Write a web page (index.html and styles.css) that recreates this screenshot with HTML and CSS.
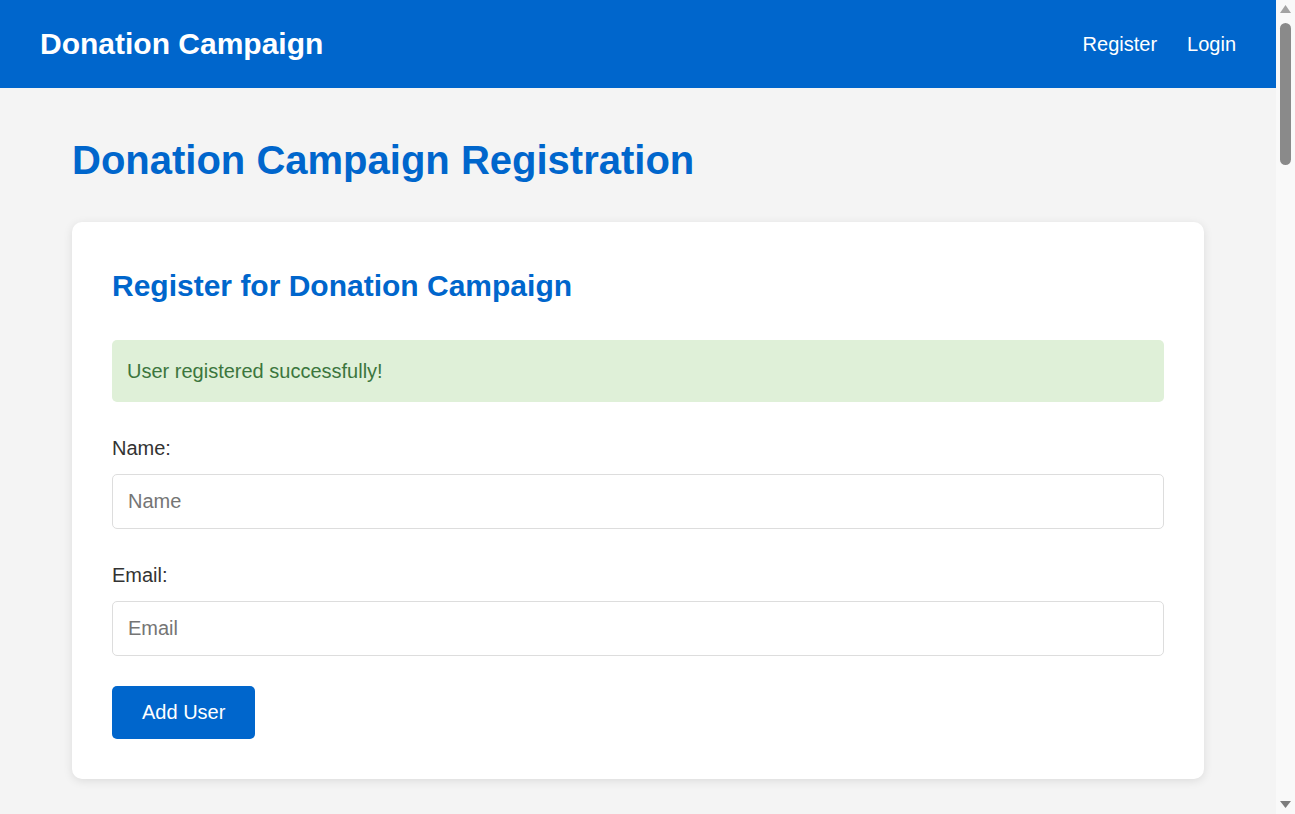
FILE: index.html
```html
<!DOCTYPE html>
<html lang="en">
<head>
<meta charset="utf-8">
<title>Donation Campaign</title>
<link rel="stylesheet" href="styles.css">
</head>
<body>
<header class="site-header">
  <div class="brand">Donation Campaign</div>
  <nav class="nav">
    <a href="#" class="nav-link">Register</a>
    <a href="#" class="nav-link">Login</a>
  </nav>
</header>
<main class="main">
  <h1 class="page-title">Donation Campaign Registration</h1>
  <section class="card">
    <h2 class="card-title">Register for Donation Campaign</h2>
    <div class="alert">User registered successfully!</div>
    <form class="form">
      <div class="form-group">
        <label class="label" for="name">Name:</label>
        <input class="input" id="name" type="text" placeholder="Name">
      </div>
      <div class="form-group">
        <label class="label" for="email">Email:</label>
        <input class="input" id="email" type="email" placeholder="Email">
      </div>
      <button type="button" class="btn">Add User</button>
    </form>
  </section>
</main>
<div class="scrollbar" aria-hidden="true">
  <svg class="scroll-arrow" width="19" height="17" viewBox="0 0 19 17"><path d="M9.5 5 L15 13 L4 13 Z" fill="#a3a3a3"/></svg>
  <div class="scroll-track"><div class="scroll-thumb"></div></div>
  <svg class="scroll-arrow" width="19" height="17" viewBox="0 0 19 17"><path d="M4 4 L15 4 L9.5 11 Z" fill="#7d7d7d"/></svg>
</div>
</body>
</html>
```

FILE: styles.css
```css
* { box-sizing: border-box; }

html, body {
  margin: 0;
  padding: 0;
}

body {
  font-family: "Liberation Sans", Arial, sans-serif;
  font-size: 20px;
  line-height: 1.6;
  color: #333;
  background: #f4f4f4;
  margin-right: 19px;
}

.site-header {
  height: 88px;
  background: #0066cc;
  color: #fff;
  display: flex;
  align-items: center;
  justify-content: space-between;
  padding: 0 40px;
}

.brand {
  font-size: 30px;
  font-weight: bold;
  line-height: 1;
}

.nav {
  display: flex;
  gap: 30px;
}

.nav-link {
  color: #fff;
  text-decoration: none;
  font-size: 20px;
}

.main {
  padding: 40px 72px;
}

.page-title {
  margin: 0 0 30px;
  font-size: 40px;
  color: #0066cc;
  font-weight: bold;
}

.card {
  background: #fff;
  border-radius: 10px;
  padding: 40px;
  box-shadow: 0 2px 10px rgba(0, 0, 0, 0.1);
}

.card-title {
  margin: 0 0 30px;
  font-size: 30px;
  color: #0066cc;
  font-weight: bold;
}

.alert {
  background: #dff0d8;
  color: #3c763d;
  padding: 15px;
  border-radius: 5px;
  margin-bottom: 30px;
  line-height: 32px;
}

.form-group {
  margin-bottom: 30px;
}

.label {
  display: block;
  margin-bottom: 10px;
}

.input {
  display: block;
  width: 100%;
  height: 55px;
  padding: 0 15px;
  border: 1px solid #ddd;
  border-radius: 5px;
  font-family: inherit;
  font-size: 20px;
  color: #333;
  background: #fff;
}

.input::placeholder {
  color: #757575;
}

.btn {
  display: block;
  height: 53px;
  padding: 0 30px;
  background: #0066cc;
  color: #fff;
  border: none;
  border-radius: 5px;
  font-family: inherit;
  font-size: 20px;
  cursor: pointer;
}

/* replica of the classic browser scrollbar shown in the reference */
.scrollbar {
  position: fixed;
  top: 0;
  right: 0;
  width: 19px;
  height: 100vh;
  background: #f9f9f9;
  display: flex;
  flex-direction: column;
}

.scroll-arrow {
  display: block;
  flex: none;
}

.scroll-track {
  flex: 1;
  padding: 6px 4px 0;
}

.scroll-thumb {
  height: 142px;
  background: #8a8a8a;
  border-radius: 6px;
}
```
